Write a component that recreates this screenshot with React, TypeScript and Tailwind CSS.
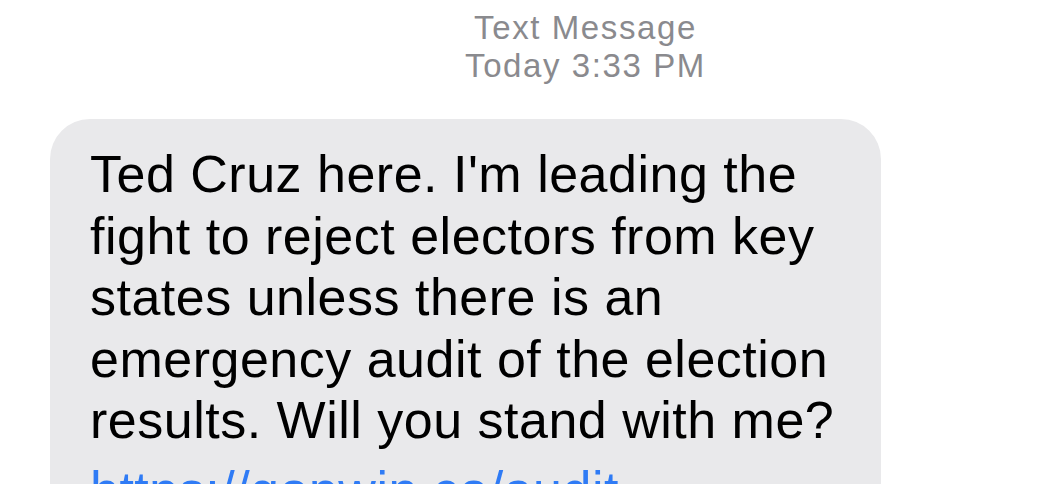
import React from "react";

const lines = [
  "Ted Cruz here. I'm leading the",
  "fight to reject electors from key",
  "states unless there is an",
  "emergency audit of the election",
  "results. Will you stand with me?",
];

function App() {
  return (
    <div
      className="w-[1046px] h-[484px] overflow-hidden bg-white"
      style={{ fontFamily: '"Liberation Sans", Arial, sans-serif' }}
    >
      {/* header */}
      <div className="flex flex-col items-center pt-[9px] pl-[125px] text-[33px] leading-[38px] tracking-[1.6px] text-[#8a8a8e]">
        <div>Text Message</div>
        <div>Today 3:33 PM</div>
      </div>

      {/* message bubble */}
      <div className="mt-[34px] ml-[50px] w-[831px] rounded-[40px] bg-[#e9e9eb] pl-[40px] pt-[25px] pb-10">
        <div className="text-[52px] leading-[61.5px] tracking-[0.5px] text-black whitespace-nowrap">
          {lines.map((l) => (
            <div key={l}>{l}</div>
          ))}
          <div className="mt-[8px] text-[#2f7bf5]">https://gopwin.co/audit</div>
        </div>
      </div>
    </div>
  );
}

export default App;
